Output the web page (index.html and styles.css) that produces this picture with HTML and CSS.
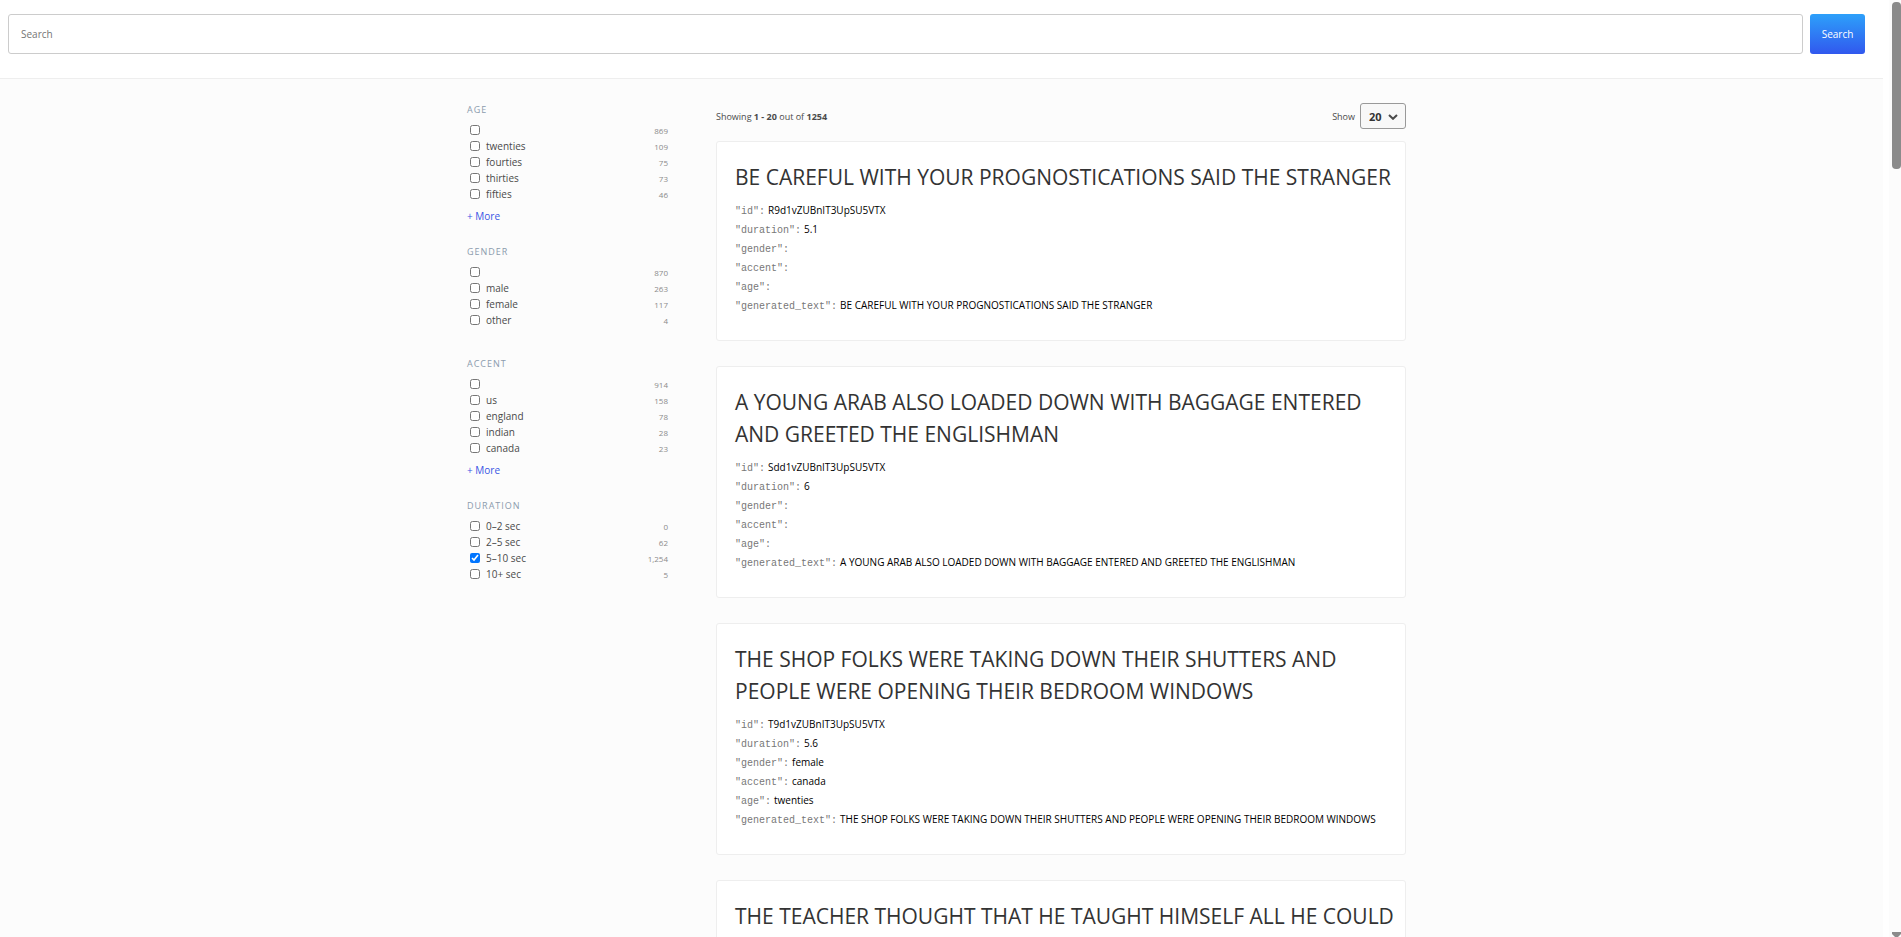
FILE: index.html
```html
<!DOCTYPE html>
<html lang="en">
<head>
<meta charset="utf-8">
<title>Search</title>
<link rel="stylesheet" href="styles.css">
</head>
<body>
<div class="window">
  <div class="page">
    <header class="header">
      <form class="search" onsubmit="return false">
        <input class="search-input" type="text" placeholder="Search" aria-label="Search">
        <button class="search-button" type="submit">Search</button>
      </form>
    </header>
    <div class="body">
      <div class="layout">
        <aside class="sidebar">
          <section class="facet facet-expandable">
            <h2 class="facet-title">AGE</h2>
            <label class="option"><input type="checkbox" aria-label="Age not set"><span class="name"></span><span class="count">869</span></label>
            <label class="option"><input type="checkbox"><span class="name">twenties</span><span class="count">109</span></label>
            <label class="option"><input type="checkbox"><span class="name">fourties</span><span class="count">75</span></label>
            <label class="option"><input type="checkbox"><span class="name">thirties</span><span class="count">73</span></label>
            <label class="option"><input type="checkbox"><span class="name">fifties</span><span class="count">46</span></label>
            <button class="more" type="button">+ More</button>
          </section>
          <section class="facet">
            <h2 class="facet-title">GENDER</h2>
            <label class="option"><input type="checkbox" aria-label="Gender not set"><span class="name"></span><span class="count">870</span></label>
            <label class="option"><input type="checkbox"><span class="name">male</span><span class="count">263</span></label>
            <label class="option"><input type="checkbox"><span class="name">female</span><span class="count">117</span></label>
            <label class="option"><input type="checkbox"><span class="name">other</span><span class="count">4</span></label>
          </section>
          <section class="facet facet-expandable">
            <h2 class="facet-title">ACCENT</h2>
            <label class="option"><input type="checkbox" aria-label="Accent not set"><span class="name"></span><span class="count">914</span></label>
            <label class="option"><input type="checkbox"><span class="name">us</span><span class="count">158</span></label>
            <label class="option"><input type="checkbox"><span class="name">england</span><span class="count">78</span></label>
            <label class="option"><input type="checkbox"><span class="name">indian</span><span class="count">28</span></label>
            <label class="option"><input type="checkbox"><span class="name">canada</span><span class="count">23</span></label>
            <button class="more" type="button">+ More</button>
          </section>
          <section class="facet">
            <h2 class="facet-title">DURATION</h2>
            <label class="option"><input type="checkbox"><span class="name">0–2 sec</span><span class="count">0</span></label>
            <label class="option"><input type="checkbox"><span class="name">2–5 sec</span><span class="count">62</span></label>
            <label class="option"><input type="checkbox" checked><span class="name">5–10 sec</span><span class="count">1,254</span></label>
            <label class="option"><input type="checkbox"><span class="name">10+ sec</span><span class="count">5</span></label>
          </section>
        </aside>
        <main class="main">
          <div class="toolbar">
            <div>Showing <strong>1 - 20</strong> out of <strong>1254</strong></div>
            <div class="page-size">
              <label for="page-size">Show</label>
              <div class="select-wrap">
                <select id="page-size" class="select"><option>20</option><option>40</option><option>60</option></select>
                <svg class="chevron" viewBox="0 0 10 6" aria-hidden="true"><path d="M1 1l4 3.8L9 1" fill="none" stroke="#4a4a4a" stroke-width="2"/></svg>
              </div>
            </div>
          </div>
          <article class="card">
            <h1 class="card-title">BE CAREFUL WITH YOUR PROGNOSTICATIONS SAID THE STRANGER</h1>
            <ul class="fields">
              <li><span class="key">"id":</span>R9d1vZUBnIT3UpSU5VTX</li>
              <li><span class="key">"duration":</span>5.1</li>
              <li><span class="key">"gender":</span></li>
              <li><span class="key">"accent":</span></li>
              <li><span class="key">"age":</span></li>
              <li><span class="key">"generated_text":</span>BE CAREFUL WITH YOUR PROGNOSTICATIONS SAID THE STRANGER</li>
            </ul>
          </article>
          <article class="card">
            <h1 class="card-title">A YOUNG ARAB ALSO LOADED DOWN WITH BAGGAGE ENTERED AND GREETED THE ENGLISHMAN</h1>
            <ul class="fields">
              <li><span class="key">"id":</span>Sdd1vZUBnIT3UpSU5VTX</li>
              <li><span class="key">"duration":</span>6</li>
              <li><span class="key">"gender":</span></li>
              <li><span class="key">"accent":</span></li>
              <li><span class="key">"age":</span></li>
              <li><span class="key">"generated_text":</span>A YOUNG ARAB ALSO LOADED DOWN WITH BAGGAGE ENTERED AND GREETED THE ENGLISHMAN</li>
            </ul>
          </article>
          <article class="card">
            <h1 class="card-title">THE SHOP FOLKS WERE TAKING DOWN THEIR SHUTTERS AND PEOPLE WERE OPENING THEIR BEDROOM WINDOWS</h1>
            <ul class="fields">
              <li><span class="key">"id":</span>T9d1vZUBnIT3UpSU5VTX</li>
              <li><span class="key">"duration":</span>5.6</li>
              <li><span class="key">"gender":</span>female</li>
              <li><span class="key">"accent":</span>canada</li>
              <li><span class="key">"age":</span>twenties</li>
              <li><span class="key">"generated_text":</span>THE SHOP FOLKS WERE TAKING DOWN THEIR SHUTTERS AND PEOPLE WERE OPENING THEIR BEDROOM WINDOWS</li>
            </ul>
          </article>
          <article class="card">
            <h1 class="card-title">THE TEACHER THOUGHT THAT HE TAUGHT HIMSELF ALL HE COULD</h1>
          </article>
        </main>
      </div>
    </div>
  </div>
  <div class="scrollbar" aria-hidden="true">
    <div class="thumb"></div>
    <svg class="arrow" viewBox="0 0 9 5"><path d="M0 0h9v2L6 5H3L0 2z" fill="#8b8b8b"/></svg>
  </div>
</div>
</body>
</html>
```

FILE: styles.css
```css
* { box-sizing: border-box; }

body {
  margin: 0;
  overflow: hidden;
  background: #fff;
  color: #333;
  font-family: "Open Sans", "Noto Sans", sans-serif;
  font-size: 10px;
}

.window {
  display: flex;
  gap: 6px;
  height: 100vh;
}

.page {
  flex: 1;
  min-width: 0;
  overflow: hidden;
}

.header {
  padding: 14px 18px 24px 8px;
  border-bottom: 1px solid #eee;
}

.search {
  display: flex;
  gap: 7px;
}

.search-input {
  flex: 1;
  min-width: 0;
  height: 40px;
  padding: 0 12px;
  border: 1px solid #ccc;
  border-radius: 3px;
  background: #fff;
  color: #333;
  font: inherit;
}

.search-input::placeholder { color: #757575; opacity: 1; }

.search-button {
  min-width: 55px;
  height: 40px;
  padding: 0 10px;
  border: 0;
  border-radius: 3px;
  background: linear-gradient(#2da0fa, #3158ee);
  color: #fff;
  font: inherit;
}

.body {
  padding: 24px 18px 24px 8px;
  background: #fcfcfc;
}

.layout {
  display: grid;
  grid-template-columns: 201px minmax(0, 1fr);
  gap: 48px;
  max-width: 939px;
  margin: 0 auto;
}

.facet { margin-bottom: 29px; }
.facet-expandable { margin-bottom: 21px; }

.facet-title {
  margin: 0 0 6px;
  color: #8b9bad;
  font-size: 9px;
  font-weight: 400;
  line-height: 13px;
  letter-spacing: 1px;
}

.option {
  display: flex;
  align-items: center;
  height: 16px;
  color: #4a4a4a;
}

.option input {
  width: 10px;
  height: 10px;
  margin: 0 6px 0 3px;
}

.name { flex: 1; }

.count {
  color: #8b8b8b;
  font-size: 8px;
}

.more {
  display: block;
  margin-top: 6px;
  padding: 0;
  border: 0;
  background: none;
  color: #3a56e4;
  font: inherit;
  line-height: 16px;
}

.toolbar {
  display: flex;
  align-items: center;
  justify-content: space-between;
  margin-bottom: 12px;
  color: #4a4a4a;
  font-size: 9px;
}

.page-size {
  display: flex;
  align-items: center;
  gap: 5px;
}

.select-wrap { position: relative; }

.select {
  display: block;
  width: 46px;
  height: 26px;
  padding: 0 8px;
  border: 1px solid #999;
  border-radius: 3px;
  appearance: none;
  background: #f8f8f8;
  color: #333;
  font: inherit;
  font-size: 11px;
  font-weight: 700;
}

.chevron {
  position: absolute;
  top: 11px;
  right: 8px;
  width: 10px;
  height: 6px;
  pointer-events: none;
}

.card {
  margin-bottom: 25px;
  padding: 19px 8px 25px 18px;
  border: 1px solid #eee;
  border-radius: 3px;
  background: #fff;
}

.card-title {
  margin: 0 0 8px;
  font-size: 21px;
  font-weight: 400;
  line-height: 32px;
}

.fields {
  margin: 0;
  padding: 0;
  color: #000;
  line-height: 19px;
  list-style: none;
}

.fields li { height: 19px; white-space: nowrap; }

.key {
  margin-right: 3px;
  color: #777;
  font-family: "Liberation Mono", monospace;
}

.scrollbar {
  display: flex;
  flex-direction: column;
  align-items: flex-end;
  justify-content: space-between;
  width: 12px;
  padding-top: 2px;
  background: #fcfcfc;
}

.thumb {
  width: 9px;
  height: 167px;
  border-radius: 4px;
  background: #8b8b8b;
}

.arrow {
  width: 9px;
  height: 5px;
}
```
